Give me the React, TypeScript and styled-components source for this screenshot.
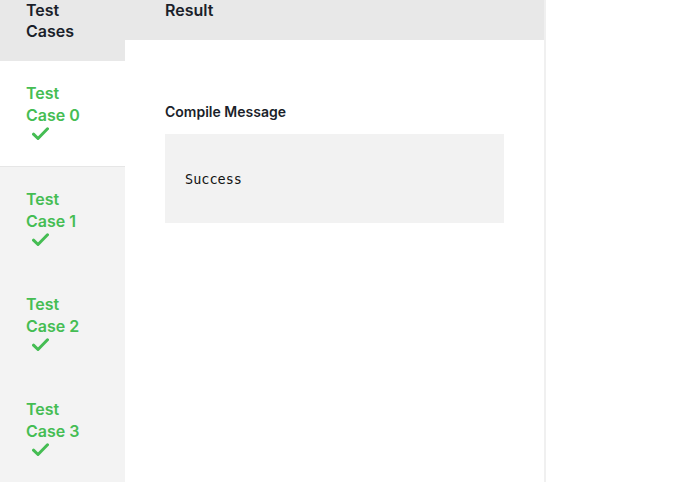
import { createGlobalStyle } from 'styled-components';
import styled from 'styled-components';

const GlobalStyle = createGlobalStyle`
  html, body {
    margin: 0;
    padding: 0;
    background: #ffffff;
  }
  body {
    font-family: Inter, "Noto Sans", sans-serif;
    color: #1b1f2a;
  }
`;

const Page = styled.div`
  display: flex;
  width: 690px;
  height: 482px;
  overflow: hidden;
`;

const Sidebar = styled.div`
  display: flex;
  flex-direction: column;
  width: 125px;
  flex-shrink: 0;
  background: #f3f3f3;
`;

const SidebarHeader = styled.div`
  height: 62px;
  box-sizing: border-box;
  padding: 0 0 0 26px;
  background: #e8e8e8;
  font-size: 16px;
  font-weight: 600;
  line-height: 21px;
`;

const Tab = styled.div<{ $active?: boolean }>`
  height: 106px;
  box-sizing: border-box;
  padding: 21px 0 0 26px;
  background: ${({ $active }) => ($active ? '#ffffff' : '#f3f3f3')};
  border-bottom: 1px solid ${({ $active }) => ($active ? '#e6e6e6' : 'transparent')};
  color: #45bd53;
  font-size: 16px;
  font-weight: 600;
  line-height: 22px;
`;

const Check = styled.svg`
  display: block;
  margin: 1px 0 0 6px;
`;

const Main = styled.div`
  display: flex;
  flex-direction: column;
  width: 419px;
  flex-shrink: 0;
  border-right: 2px solid #f0f0f0;
`;

const MainHeader = styled.div`
  height: 40px;
  box-sizing: border-box;
  padding: 0 0 0 40px;
  background: #e8e8e8;
  font-size: 16px;
  font-weight: 600;
  line-height: 21px;
`;

const Content = styled.div`
  padding: 62px 40px 0 40px;
`;

const SectionTitle = styled.div`
  font-size: 14px;
  font-weight: 600;
  line-height: 20px;
  margin-bottom: 12px;
`;

const MessageBox = styled.div`
  height: 89px;
  box-sizing: border-box;
  padding: 1px 20px 0;
  display: flex;
  align-items: center;
  background: #f2f2f2;
  font-family: "DejaVu Sans Mono", "Liberation Mono", monospace;
  font-size: 13.5px;
  color: #111;
`;

const CheckIcon = () => (
  <Check width="17" height="14" viewBox="0 0 17 14">
    <path d="M1.5 7.2 L6 11.5 L15.5 1.8" fill="none" stroke="#45bd53" strokeWidth="3" strokeLinecap="round" strokeLinejoin="round" />
  </Check>
);

const cases = [0, 1, 2, 3];

export default function App() {
  return (
    <>
      <GlobalStyle />
      <Page>
        <Sidebar>
          <SidebarHeader>
            Test
            <br />
            Cases
          </SidebarHeader>
          {cases.map((n) => (
            <Tab key={n} $active={n === 0}>
              Test
              <br />
              Case {n}
              <CheckIcon />
            </Tab>
          ))}
        </Sidebar>
        <Main>
          <MainHeader>Result</MainHeader>
          <Content>
            <SectionTitle>Compile Message</SectionTitle>
            <MessageBox>Success</MessageBox>
          </Content>
        </Main>
      </Page>
    </>
  );
}
